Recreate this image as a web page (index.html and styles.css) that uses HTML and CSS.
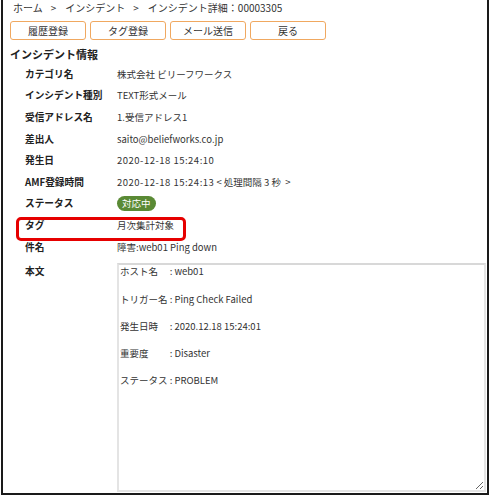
FILE: index.html
```html
<!DOCTYPE html>
<html lang="ja">
<head>
<meta charset="utf-8">
<link rel="stylesheet" href="styles.css">
</head>
<body>
<div class="frame">
  <div class="breadcrumb"><span>ホーム</span><span class="sep">&gt;</span><span>インシデント</span><span class="sep">&gt;</span><span>インシデント詳細：00003305</span></div>
  <div class="buttons">
    <button class="btn">履歴登録</button>
    <button class="btn">タグ登録</button>
    <button class="btn">メール送信</button>
    <button class="btn">戻る</button>
  </div>
  <h2 class="heading">インシデント情報</h2>
  <div class="details">
    <div class="row"><div class="label">カテゴリ名</div><div class="value">株式会社 ビリーフワークス</div></div>
    <div class="row"><div class="label">インシデント種別</div><div class="value">TEXT形式メール</div></div>
    <div class="row"><div class="label">受信アドレス名</div><div class="value">1.受信アドレス1</div></div>
    <div class="row"><div class="label">差出人</div><div class="value">saito@beliefworks.co.jp</div></div>
    <div class="row"><div class="label">発生日</div><div class="value"><span class="num">2020-12-18 15:24:10</span></div></div>
    <div class="row"><div class="label">AMF登録時間</div><div class="value"><span class="num">2020-12-18 15:24:13</span> &lt; 処理間隔 3 秒 &nbsp;&gt;</div></div>
    <div class="row"><div class="label">ステータス</div><div class="value"><span class="badge">対応中</span></div></div>
    <div class="row row-tag"><div class="label">タグ</div><div class="value">月次集計対象</div></div>
    <div class="row"><div class="label">件名</div><div class="value">障害:web01 Ping down</div></div>
    <div class="row row-body"><div class="label">本文</div><div class="value"><textarea class="body-text" readonly>ホスト名　 : web01

トリガー名 : Ping Check Failed

発生日時　 : 2020.12.18 15:24:01

重要度　　 : Disaster

ステータス : PROBLEM</textarea></div></div>
  </div>
</div>
</body>
</html>
```
FILE: styles.css
```css
* { box-sizing: border-box; }
html, body { margin: 0; padding: 0; background: #fff; }
body {
  font-family: "Noto Sans CJK JP", "Noto Sans", sans-serif;
  color: #333;
  font-size: 10px;
}
.frame {
  margin-left: 1px;
  width: 488px;
  height: 495px;
  border: 2px solid #1a1a1a;
  border-top: none;
  padding: 0 1px 0 7px;
  display: flex;
  flex-direction: column;
}
.breadcrumb {
  font-size: 10px;
  line-height: 14px;
  padding: 1px 0 0 3px;
  height: 21px;
  color: #333;
}
.sep { margin: 0 9px 0 8px; }
.buttons {
  display: flex;
  gap: 4px;
  height: 19px;
}
.btn {
  width: 76px;
  height: 19px;
  border: 1px solid #f0a860;
  border-radius: 3px;
  background: #fff;
  font-family: inherit;
  font-size: 10px;
  line-height: 15px;
  color: #333;
  padding: 0;
}
.heading {
  margin: 0;
  font-size: 11px;
  font-weight: bold;
  color: #222;
  line-height: 16px;
  padding-top: 6px;
  height: 23px;
}
.details {
  display: flex;
  flex-direction: column;
  flex: 1;
  padding-left: 15px;
}
.row {
  display: grid;
  grid-template-columns: 92px 1fr;
  height: 21.6px;
  align-items: center;
  position: relative;
}
.label {
  font-weight: bold;
  color: #222;
  font-size: 9.7px;
}
.value {
  color: #333;
  font-size: 9.5px;
}
.num { letter-spacing: 0.5px; }
.badge {
  display: inline-block;
  background: #5a8a35;
  color: #fff;
  border-radius: 8px;
  padding: 0 5px;
  line-height: 15px;
  height: 15px;
}
.row-tag::after {
  content: "";
  position: absolute;
  left: -9px;
  top: 3px;
  width: 164px;
  height: 18px;
  border: 3px solid #e60000;
  border-radius: 5px;
}
.row-body {
  flex: 1;
  align-items: start;
  padding-top: 6px;
  padding-bottom: 1px;
}
.row-body .label { padding-top: 1px; }
.row-body .value { height: 100%; }
.body-text {
  width: 100%;
  height: 100%;
  display: block;
  border: 2px solid #e4e4e4;
  border-top-color: #d8d8d8;
  padding: 0 1px;
  font-family: inherit;
  font-size: 9.5px;
  line-height: 13.6px;
  color: #333;
  resize: both;
  overflow: hidden;
}
```
